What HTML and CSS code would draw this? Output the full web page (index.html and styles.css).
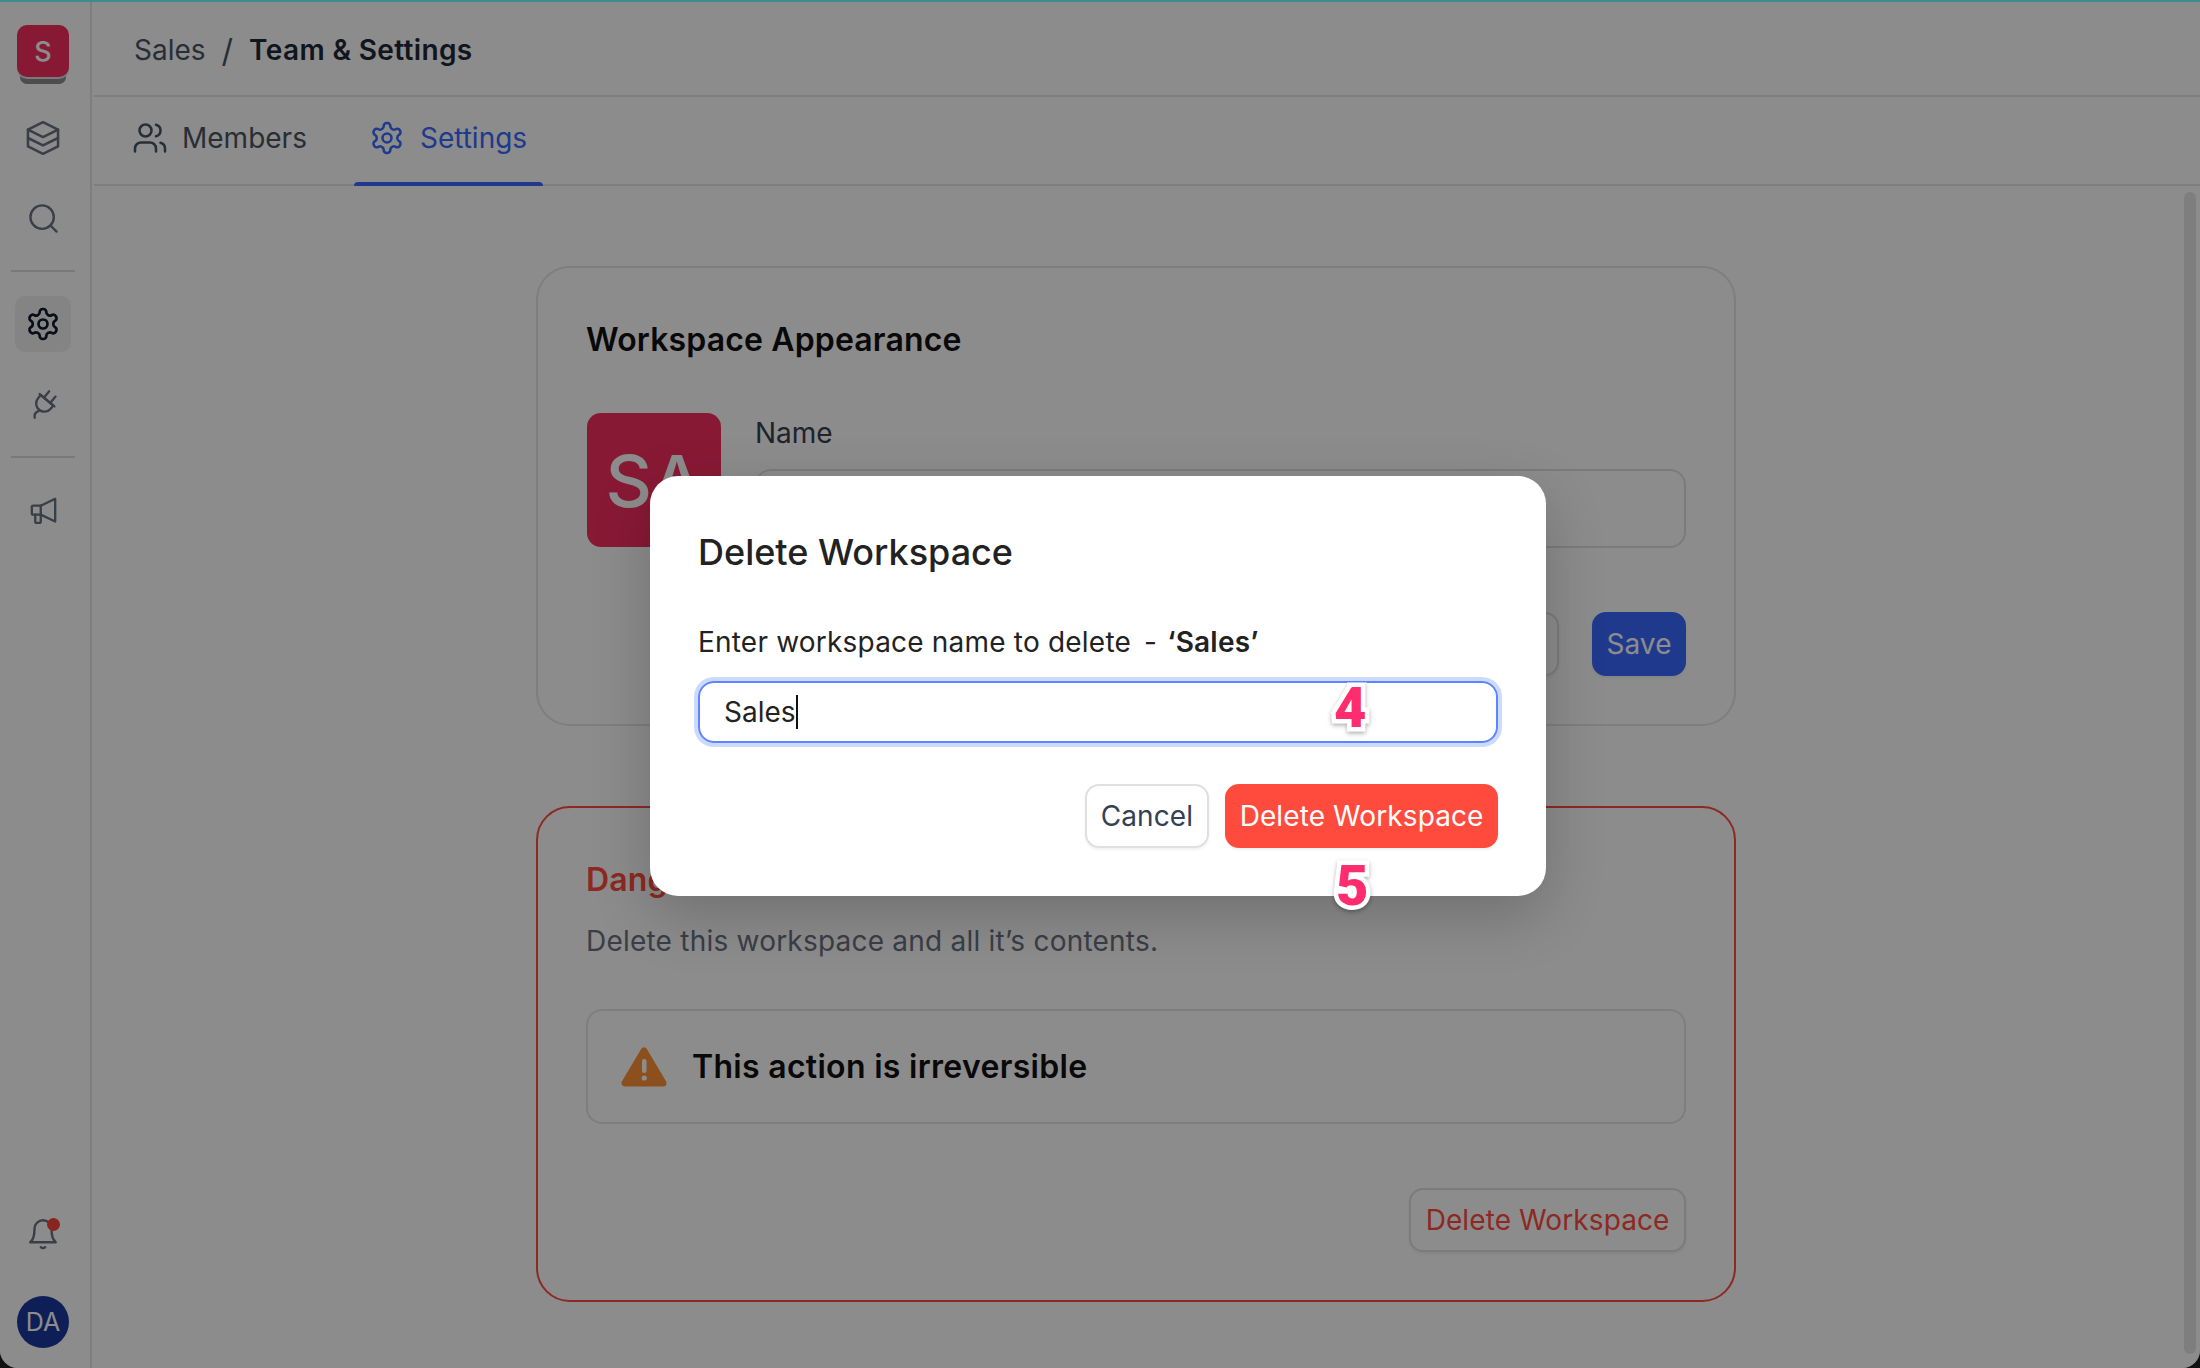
FILE: index.html
```html
<!DOCTYPE html>
<html lang="en">
<head>
  <meta charset="UTF-8" />
  <meta name="viewport" content="width=device-width, initial-scale=1.0"/>
  <title>Team &amp; Settings</title>
  <link rel="stylesheet" href="styles.css">
</head>
<body>
  <div class="topbar"></div>

  <div class="app">
    <aside class="sidebar">
      <div class="logo">S</div>

      <div class="nav-item nav-layers">
        <svg class="icon" viewBox="0 0 24 24"><path d="M12 2l9.500 4.700v10.600L12 22l-9.500-4.700V6.700z"/><path d="M2.500 6.700L12 11.400l9.500-4.700"/><path d="M2.500 12L12 16.700 21.500 12"/></svg>
      </div>
      <div class="nav-item">
        <svg class="icon" viewBox="0 0 24 24"><circle cx="11" cy="11" r="8.500"/><path d="M21.500 21.500l-4.400-4.400"/></svg>
      </div>

      <div class="nav-line"></div>

      <div class="nav-item active nav-gear">
        <svg class="icon" viewBox="0 0 24 24"><path d="M12.220 2h-.44a2 2 0 0 0-2 2v.18a2 2 0 0 1-1 1.730l-.43.25a2 2 0 0 1-2 0l-.15-.08a2 2 0 0 0-2.730.73l-.22.38a2 2 0 0 0 .73 2.730l.15.1a2 2 0 0 1 1 1.720v.51a2 2 0 0 1-1 1.740l-.15.09a2 2 0 0 0-.73 2.730l.22.38a2 2 0 0 0 2.730.73l.15-.08a2 2 0 0 1 2 0l.43.25a2 2 0 0 1 1 1.730V20a2 2 0 0 0 2 2h.44a2 2 0 0 0 2-2v-.18a2 2 0 0 1 1-1.730l.43-.25a2 2 0 0 1 2 0l.15.08a2 2 0 0 0 2.730-.73l.22-.39a2 2 0 0 0-.73-2.730l-.15-.08a2 2 0 0 1-1-1.740v-.5a2 2 0 0 1 1-1.740l.15-.09a2 2 0 0 0 .73-2.730l-.22-.38a2 2 0 0 0-2.730-.73l-.15.08a2 2 0 0 1-2 0l-.43-.25a2 2 0 0 1-1-1.730V4a2 2 0 0 0-2-2z"/><circle cx="12" cy="12" r="3"/></svg>
      </div>
      <div class="nav-item">
        <svg class="icon" viewBox="0 0 24 24"><g transform="rotate(40 12 12)"><path d="M9 2v6"/><path d="M15 2v6"/><path d="M5 8h14"/><path d="M6 11V8h12v3a6 6 0 1 1-12 0z"/></g><path d="M8.600 16.600c-2.400 1-3.600 2.600-3 5"/></svg>
      </div>

      <div class="nav-line"></div>

      <div class="nav-item">
        <svg class="icon" viewBox="0 0 24 24"><path d="M20.500 3.500L10 8.500H4.500a1 1 0 0 0-1 1v4.500a1 1 0 0 0 1 1H10l10.500 5z"/><path d="M10 8.500V15"/><path d="M6 15v5a1 1 0 0 0 1 1h2a1 1 0 0 0 1-1v-5"/></svg>
      </div>

      <div class="sidebar-bottom">
        <div class="bell">
          <svg class="icon" viewBox="0 0 24 24"><path d="M6 9a6 6 0 0 1 12 0c0 6 1 8 3 9.500H3c2-1.500 3-3.500 3-9.500z"/><path d="M10.500 22a2 2 0 0 0 3 0"/></svg>
          <span class="bell-dot"></span>
        </div>
        <div class="user">DA</div>
      </div>
    </aside>

    <main class="main">
      <header class="crumbs">
        <span>Sales</span>
        <span class="crumb-sep">/</span>
        <strong>Team &amp; Settings</strong>
      </header>

      <nav class="tabs">
        <div class="tab">
          <svg class="icon" viewBox="0 0 24 24"><path d="M16 21v-2a4 4 0 0 0-4-4H6a4 4 0 0 0-4 4v2"/><circle cx="9" cy="7" r="4"/><path d="M22 21v-2a4 4 0 0 0-3-3.870"/><path d="M16 3.130a4 4 0 0 1 0 7.750"/></svg>
          Members
        </div>
        <div class="tab tab-on">
          <svg class="icon" viewBox="0 0 24 24"><path d="M12.220 2h-.44a2 2 0 0 0-2 2v.18a2 2 0 0 1-1 1.730l-.43.25a2 2 0 0 1-2 0l-.15-.08a2 2 0 0 0-2.730.73l-.22.38a2 2 0 0 0 .73 2.730l.15.1a2 2 0 0 1 1 1.720v.51a2 2 0 0 1-1 1.740l-.15.09a2 2 0 0 0-.73 2.730l.22.38a2 2 0 0 0 2.730.73l.15-.08a2 2 0 0 1 2 0l.43.25a2 2 0 0 1 1 1.730V20a2 2 0 0 0 2 2h.44a2 2 0 0 0 2-2v-.18a2 2 0 0 1 1-1.730l.43-.25a2 2 0 0 1 2 0l.15.08a2 2 0 0 0 2.730-.73l.22-.39a2 2 0 0 0-.73-2.730l-.15-.08a2 2 0 0 1-1-1.740v-.5a2 2 0 0 1 1-1.740l.15-.09a2 2 0 0 0 .73-2.730l-.22-.38a2 2 0 0 0-2.730-.73l-.15.08a2 2 0 0 1-2 0l-.43-.25a2 2 0 0 1-1-1.730V4a2 2 0 0 0-2-2z"/><circle cx="12" cy="12" r="3"/></svg>
          Settings
        </div>
      </nav>

      <section class="content">
        <div class="card">
          <h2 class="card-title">Workspace Appearance</h2>
          <div class="appearance-row">
            <div class="ws-avatar">SA</div>
            <div class="field">
              <div class="field-label">Name</div>
              <div class="field-box"></div>
            </div>
          </div>
          <div class="card-actions">
            <div class="btn">Cancel</div>
            <div class="btn btn-primary">Save</div>
          </div>
        </div>

        <div class="card card-danger">
          <h2 class="card-title">Danger Zone</h2>
          <p class="card-desc">Delete this workspace and all it’s contents.</p>
          <div class="alert">
            <svg class="alert-icon" viewBox="0 0 46 40"><path class="alert-tri" d="M23 4L4 36h38z"/><rect class="alert-mark" x="21" y="12" width="4.500" height="14" rx="2.250"/><circle class="alert-mark" cx="23.250" cy="31" r="2.600"/></svg>
            This action is irreversible
          </div>
          <div class="danger-actions">
            <div class="btn btn-danger">Delete Workspace</div>
          </div>
        </div>

        <div class="scroll-thumb"></div>
      </section>
    </main>
  </div>

  <div class="overlay">
    <div class="modal">
      <h3 class="modal-title">Delete Workspace</h3>
      <div class="modal-label">Enter workspace name to delete <span class="dash">-</span> <b>‘Sales’</b></div>
      <div class="modal-input">Sales<span class="caret"></span></div>
      <div class="modal-actions">
        <div class="btn btn-white">Cancel</div>
        <div class="btn btn-red">Delete Workspace</div>
      </div>
      <span class="step step-4">4</span>
      <span class="step step-5">5</span>
    </div>
  </div>
</body>
</html>
```

FILE: styles.css
```css
* {
  box-sizing: border-box;
}
html {
  background: #111;
}
body {
  margin: 0;
  width: 100%;
  height: 100vh;
  overflow: hidden;
  position: relative;
  background: #fff;
  color: #111827;
  font-family: Inter, "Noto Sans", sans-serif;
  font-size: 28px;
  border-radius: 0 0 18px 18px;
}
.topbar {
  height: 2px;
  background: #72fbff;
}
.app {
  display: flex;
  height: 1366px;
}
.icon {
  fill: none;
  stroke: currentColor;
  stroke-width: 1.7;
  stroke-linecap: round;
  stroke-linejoin: round;
}

/* sidebar */
.sidebar {
  width: 92px;
  flex: none;
  display: flex;
  flex-direction: column;
  align-items: center;
  padding: 23px 4px 0 0;
  border-right: 2px solid #e6e6e6;
  color: #6b7280;
}
.logo {
  width: 52px;
  height: 52px;
  margin-bottom: 33px;
  display: flex;
  align-items: center;
  justify-content: center;
  background: #f72f62;
  color: #fff;
  border-radius: 10px;
  font-size: 27px;
  font-weight: 500;
  box-shadow: 0 2px 0 #dfdfdf, 0 10px 0 -3px #8d8d8d;
}
.nav-item {
  width: 56px;
  height: 56px;
  margin-bottom: 24px;
  display: flex;
  align-items: center;
  justify-content: center;
  border-radius: 10px;
}
.nav-item .icon {
  width: 33px;
  height: 33px;
}
.nav-layers .icon {
  width: 38px;
  height: 38px;
  stroke-width: 1.6;
}
.nav-gear .icon {
  width: 36px;
  height: 36px;
  stroke-width: 1.8;
}
.nav-item.active {
  background: #f1f1f1;
  color: #111827;
}
.nav-line {
  width: 64px;
  height: 2px;
  margin-bottom: 24px;
  background: #dcdcdc;
}
.sidebar-bottom {
  margin-top: auto;
  padding-bottom: 20px;
  display: flex;
  flex-direction: column;
  align-items: center;
  gap: 46px;
}
.bell {
  position: relative;
  width: 34px;
  height: 34px;
}
.bell .icon {
  width: 34px;
  height: 34px;
}
.bell-dot {
  position: absolute;
  top: 2px;
  right: 0;
  width: 13px;
  height: 13px;
  border-radius: 50%;
  background: #f9443a;
}
.user {
  width: 52px;
  height: 52px;
  border-radius: 50%;
  display: flex;
  align-items: center;
  justify-content: center;
  background: #1b3a9e;
  color: #fff;
  font-size: 25px;
}

/* main column */
.main {
  flex: 1;
  min-width: 0;
  display: flex;
  flex-direction: column;
}
.crumbs {
  height: 95px;
  flex: none;
  margin-left: 2px;
  padding: 3px 0 0 40px;
  display: flex;
  align-items: center;
  gap: 16px;
  border-bottom: 2px solid #e6e6e6;
  color: #4b5563;
}
.crumbs strong {
  font-weight: 600;
  letter-spacing: 0.36px;
  color: #1f2937;
}
.crumb-sep {
  font-size: 32px;
}
.tabs {
  height: 89px;
  flex: none;
  margin-left: 2px;
  padding-left: 38px;
  display: flex;
  gap: 47px;
  border-bottom: 2px solid #e6e6e6;
}
.tab {
  position: relative;
  height: 87px;
  padding-bottom: 6px;
  display: flex;
  align-items: center;
  gap: 14px;
  color: #4b5563;
}
.tab .icon {
  width: 36px;
  height: 36px;
  stroke-width: 1.7;
}
.tab-on {
  padding: 0 16px 6px 15px;
  gap: 15px;
  color: #3a6bff;
}
.tab-on::after {
  content: "";
  position: absolute;
  left: 0;
  right: 0;
  bottom: -2px;
  height: 4px;
  background: #3a6bff;
  border-radius: 4px 4px 0 0;
}
.content {
  flex: 1;
  position: relative;
  padding: 80px 20px 0 0;
  display: flex;
  flex-direction: column;
  align-items: center;
  gap: 80px;
}
.scroll-thumb {
  position: absolute;
  top: 6px;
  right: 4px;
  bottom: 14px;
  width: 12px;
  border-radius: 6px;
  background: #e6e6e6;
}

/* cards */
.card {
  width: 1200px;
  padding: 49px 48px 48px;
  border: 2px solid #e6e6e6;
  border-radius: 34px;
}
.card-title {
  margin: 0;
  font-size: 32px;
  line-height: 46px;
  font-weight: 600;
  letter-spacing: 0.15px;
  color: #111;
}
.appearance-row {
  display: flex;
  gap: 34px;
  margin-top: 50px;
}
.ws-avatar {
  width: 134px;
  height: 134px;
  margin-left: 1px;
  flex: none;
  display: flex;
  align-items: center;
  justify-content: center;
  background: #f72f62;
  color: #fff;
  border-radius: 14px;
  font-size: 72px;
  font-weight: 500;
}
.field {
  flex: 1;
}
.field-label {
  line-height: 40px;
  margin-bottom: 16px;
  color: #374151;
}
.field-box {
  height: 79px;
  border: 2px solid #e0e0e0;
  border-radius: 16px;
}
.card-actions,
.danger-actions,
.modal-actions {
  display: flex;
  justify-content: flex-end;
}
.card-actions {
  margin-top: 64px;
  gap: 33px;
}
.btn {
  height: 64px;
  padding: 0 13px;
  display: flex;
  align-items: center;
  border: 2px solid #e0e0e0;
  border-radius: 14px;
  white-space: nowrap;
  letter-spacing: 0.1px;
  color: #374151;
  box-shadow: 0 2px 3px rgba(0, 0, 0, 0.06);
}
.btn-primary {
  width: 94px;
  justify-content: center;
  padding: 0;
  background: #3a6bff;
  border-color: #3a6bff;
  color: #fff;
}

/* danger */
.card-danger {
  border-color: #ff4b3e;
}
.card-danger .card-title {
  color: #ff4b3e;
}
.card-desc {
  margin: 18px 0 48px;
  line-height: 40px;
  letter-spacing: 0.22px;
  color: #6b7280;
}
.alert {
  height: 115px;
  padding-left: 33px;
  display: flex;
  align-items: center;
  gap: 25px;
  border: 2px solid #e6e6e6;
  border-radius: 16px;
  font-size: 32px;
  font-weight: 600;
  letter-spacing: 0.3px;
  color: #111;
}
.alert-icon {
  width: 46px;
  height: 40px;
}
.alert-tri {
  fill: #ff9038;
  stroke: #ff9038;
  stroke-width: 7;
  stroke-linejoin: round;
}
.alert-mark {
  fill: #fff;
}
.danger-actions {
  margin-top: 64px;
}
.btn-danger {
  padding: 0 14.5px;
  color: #ff4b3e;
}

/* dialog */
.overlay {
  position: absolute;
  inset: 0;
  display: flex;
  align-items: center;
  justify-content: center;
  padding: 4px 4px 0 0;
  background: rgba(0, 0, 0, 0.45);
}
.modal {
  position: relative;
  width: 896px;
  height: 420px;
  padding: 53px 48px 0;
  background: #fff;
  border-radius: 28px;
  box-shadow: 0 20px 60px rgba(0, 0, 0, 0.2);
}
.modal-title {
  margin: 0;
  font-size: 36px;
  line-height: 46px;
  font-weight: 500;
  color: #222;
}
.modal-label {
  margin-top: 47px;
  line-height: 40px;
  letter-spacing: 0.2px;
  color: #222;
}
.dash {
  margin: 0 2px 0 5px;
}
.modal-label b {
  font-weight: 600;
}
.modal-input {
  height: 62px;
  margin-top: 19px;
  padding-left: 24px;
  display: flex;
  align-items: center;
  border: 2px solid #5b86ff;
  border-radius: 16px;
  box-shadow: 0 0 0 4px #cddafd;
  color: #222;
}
.caret {
  width: 2px;
  height: 34px;
  background: #111;
}
.modal-actions {
  margin-top: 41px;
  gap: 16px;
}
.btn-white {
  padding: 0 14px;
  color: #344054;
  background: #fff;
}
.btn-red {
  padding: 0 12.5px;
  background: #ff4b3e;
  border-color: #ff4b3e;
  color: #fff;
}

/* numbered callouts over the dialog */
.step {
  position: absolute;
  font-family: Roboto, "Liberation Sans", sans-serif;
  font-size: 56px;
  line-height: 56px;
  font-weight: 900;
  color: #ff2d6f;
  -webkit-text-stroke: 9px #fff;
  paint-order: stroke fill;
  filter: drop-shadow(0 2px 2px rgba(0, 0, 0, 0.3));
}
.step-4 {
  left: 684px;
  top: 204px;
}
.step-5 {
  left: 686px;
  top: 382px;
}
```
